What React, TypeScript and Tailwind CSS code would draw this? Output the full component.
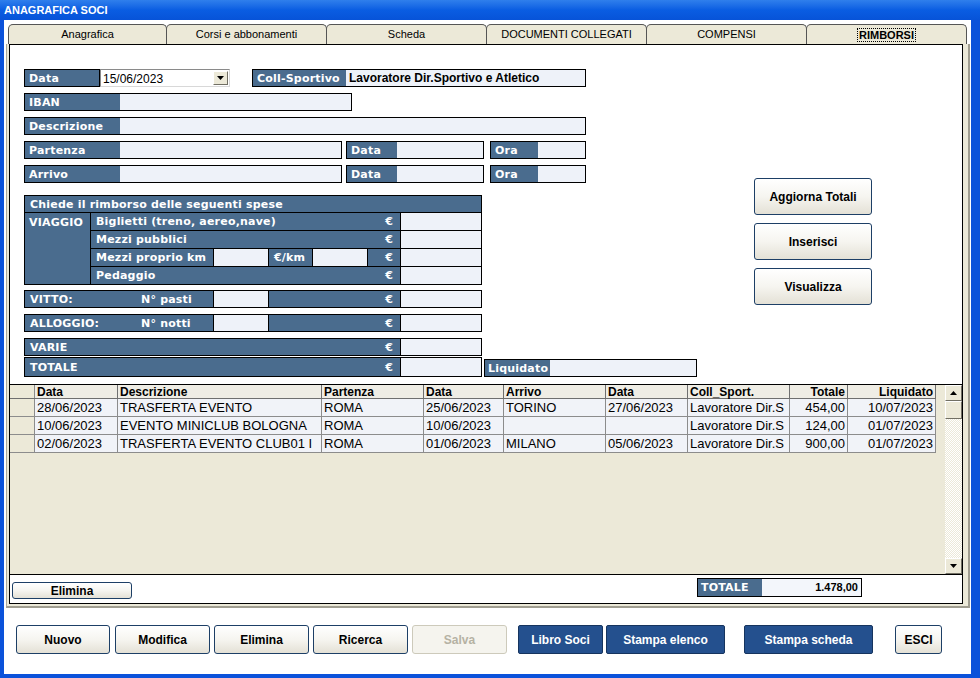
import * as React from 'react';

const LBL =
  "bg-[#4a6c8e] text-white font-['DejaVu_Sans',sans-serif] font-bold text-[11px] tracking-[0.2px] leading-none flex items-center whitespace-nowrap";
const INP = 'bg-[#eef2f9]';
const XPBTN =
  "rounded-[3px] border border-[#1d3f66] bg-linear-to-b from-[#ffffff] via-[#f6f5f0] to-[#e4e1d6] font-['Liberation_Sans',sans-serif] font-bold text-[12px] text-black flex items-center justify-center";
const BLUEBTN =
  "rounded-[2px] border border-[#16345e] bg-[#24508e] font-['Liberation_Sans',sans-serif] font-bold text-[12px] text-white flex items-center justify-center";

const tabs = ['Anagrafica', 'Corsi e abbonamenti', 'Scheda', 'DOCUMENTI COLLEGATI', 'COMPENSI', 'RIMBORSI'];

const rows = [
  ['28/06/2023', 'TRASFERTA EVENTO', 'ROMA', '25/06/2023', 'TORINO', '27/06/2023', 'Lavoratore Dir.S', '454,00', '10/07/2023'],
  ['10/06/2023', 'EVENTO MINICLUB BOLOGNA', 'ROMA', '10/06/2023', '', '', 'Lavoratore Dir.S', '124,00', '01/07/2023'],
  ['02/06/2023', 'TRASFERTA EVENTO CLUB01 I', 'ROMA', '01/06/2023', 'MILANO', '05/06/2023', 'Lavoratore Dir.S', '900,00', '01/07/2023'],
];

const cols = [
  { name: 'Data', w: 'w-[83px]' },
  { name: 'Descrizione', w: 'w-[204px]' },
  { name: 'Partenza', w: 'w-[102px]' },
  { name: 'Data', w: 'w-[80px]' },
  { name: 'Arrivo', w: 'w-[102px]' },
  { name: 'Data', w: 'w-[82px]' },
  { name: 'Coll_Sport.', w: 'w-[102px]' },
  { name: 'Totale', w: 'w-[58px]', right: true },
  { name: 'Liquidato', w: 'w-[88px]', right: true },
];

function Euro({ text, className = '' }: { text?: string; className?: string }) {
  return (
    <div className={`${LBL} ${className} justify-between pl-[5px] pr-[7px]`}>
      <span>{text}</span>
      <span>€</span>
    </div>
  );
}

function ExpRow({ label, last }: { label: string; last?: boolean }) {
  return (
    <div className={`flex ${last ? 'h-[17px]' : 'h-[18px] border-b border-black'}`}>
      <Euro text={label} className="flex-1" />
      <div className={`w-[81px] shrink-0 border-l border-black ${INP}`} />
    </div>
  );
}

function Arrow({ down }: { down?: boolean }) {
  return (
    <svg width="7" height="4" viewBox="0 0 7 4">
      <path d={down ? 'M0 0H7L3.5 4Z' : 'M0 4H7L3.5 0Z'} fill="#000" />
    </svg>
  );
}

export default function App() {
  return (
    <div className="w-[980px] h-[678px] bg-[#0b52da] flex flex-col overflow-hidden">
      {/* Title bar */}
      <div className="h-[20px] shrink-0 bg-linear-to-b from-[#2f7fec] via-[#0a5de2] to-[#0753d8] pl-[4px] flex items-center text-white font-['Liberation_Sans',sans-serif] font-bold text-[11px]">
        ANAGRAFICA SOCI
      </div>

      {/* Window body */}
      <div className="flex-1 ml-[4px] mr-[9px] mb-[4px] bg-white flex flex-col">
        {/* Tabs */}
        <div className="mt-[4px] pl-[4px] flex h-[20px]">
          {tabs.map((t, i) => (
            <div
              key={t}
              className={`${i === 0 ? 'w-[159px]' : 'w-[161px] -ml-px'} h-[20px] rounded-t-[5px] border border-b-0 border-[#555] bg-[#ece9d8] flex items-center justify-center font-['Liberation_Sans',sans-serif] text-[11px] text-black ${i === 5 ? 'font-bold' : ''}`}
            >
              {i === 5 ? (
                <span className="border border-dotted border-black px-[1px] leading-[12px]">{t}</span>
              ) : (
                t
              )}
            </div>
          ))}
        </div>

        {/* Tab panel */}
        <div className="ml-[2px] w-[964px] h-[564px] border-l border-l-[#aca899] border-r-2 border-b-2 border-r-[#a09d90] border-b-[#a09d90] bg-[#ece9d8] pl-[2px] pr-[5px] pb-[2px]">
          <div className="h-full border border-black bg-white flex flex-col">
            {/* Form */}
            <div className="h-[339px] pt-[24px] pl-[14px] flex">
              <div className="w-[562px] shrink-0 flex flex-col">
                {/* Row 1 */}
                <div className="flex h-[18px]">
                  <div className="w-[76px] h-[18px] border border-black flex">
                    <div className={`${LBL} flex-1 pl-[4px]`}>Data</div>
                  </div>
                  <div className="w-[130px] h-[18px] border border-[#8a8a8a] border-r-[#d8d8d8] border-b-[#d8d8d8] bg-white flex items-center">
                    <span className="pl-[2px] pt-[2px] flex-1 font-['Liberation_Sans',sans-serif] text-[12px] text-black leading-none">
                      15/06/2023
                    </span>
                    <div className="w-[15px] h-[14px] mr-px border border-t-white border-l-white border-r-[#716f64] border-b-[#716f64] bg-[#ece9d8] flex items-center justify-center">
                      <Arrow down />
                    </div>
                  </div>
                  <div className="ml-[22px] w-[334px] h-[18px] border border-black flex">
                    <div className={`${LBL} w-[93px] pl-[4px]`}>Coll-Sportivo</div>
                    <div className={`flex-1 ${INP} flex items-center pl-[3px] font-['Liberation_Sans',sans-serif] font-bold text-[12px] text-black whitespace-nowrap`}>
                      Lavoratore Dir.Sportivo e Atletico
                    </div>
                  </div>
                </div>

                {/* IBAN */}
                <div className="mt-[6px] w-[328px] h-[18px] border border-black flex">
                  <div className={`${LBL} w-[95px] pl-[4px]`}>IBAN</div>
                  <div className={`flex-1 ${INP}`} />
                </div>

                {/* Descrizione */}
                <div className="mt-[6px] w-[562px] h-[18px] border border-black flex">
                  <div className={`${LBL} w-[95px] pl-[4px]`}>Descrizione</div>
                  <div className={`flex-1 ${INP}`} />
                </div>

                {['Partenza', 'Arrivo'].map((l) => (
                  <div key={l} className="mt-[6px] flex h-[18px]">
                    <div className="w-[318px] h-[18px] border border-black flex">
                      <div className={`${LBL} w-[95px] pl-[4px]`}>{l}</div>
                      <div className={`flex-1 ${INP}`} />
                    </div>
                    <div className="ml-[4px] w-[138px] h-[18px] border border-black flex">
                      <div className={`${LBL} w-[50px] pl-[4px]`}>Data</div>
                      <div className={`flex-1 ${INP}`} />
                    </div>
                    <div className="ml-[6px] w-[96px] h-[18px] border border-black flex">
                      <div className={`${LBL} w-[47px] pl-[4px]`}>Ora</div>
                      <div className={`flex-1 ${INP}`} />
                    </div>
                  </div>
                ))}

                {/* Spese */}
                <div className="mt-[12px] w-[458px] border border-black">
                  <div className={`${LBL} h-[17px] pl-[5px] border-b border-black`}>
                    Chiede il rimborso delle seguenti spese
                  </div>
                  <div className="flex">
                    <div className={`${LBL} w-[66px] shrink-0 border-r border-black !items-start pt-[4px] pl-[4px]`}>VIAGGIO</div>
                    <div className="flex-1 flex flex-col">
                      <ExpRow label="Biglietti (treno, aereo,nave)" />
                      <ExpRow label="Mezzi pubblici" />
                      <div className="flex h-[18px] border-b border-black">
                        <div className={`${LBL} w-[122px] pl-[5px]`}>Mezzi proprio km</div>
                        <div className={`w-[55px] border-l border-black ${INP}`} />
                        <div className={`${LBL} w-[44px] border-l border-black pl-[5px]`}>€/km</div>
                        <div className={`w-[55px] border-l border-black ${INP}`} />
                        <div className={`${LBL} w-[33px] border-l border-black justify-end pr-[7px]`}>€</div>
                        <div className={`w-[81px] border-l border-black ${INP}`} />
                      </div>
                      <ExpRow label="Pedaggio" last />
                    </div>
                  </div>
                </div>

                {[
                  ['VITTO:', 'N° pasti'],
                  ['ALLOGGIO:', 'N° notti'],
                ].map(([a, b], i) => (
                  <div key={a} className={`${i === 0 ? 'mt-[5px]' : 'mt-[6px]'} w-[458px] h-[18px] border border-black flex`}>
                    <div className={`${LBL} w-[188px] pl-[5px]`}>
                      <span className="w-[111px]">{a}</span>
                      <span>{b}</span>
                    </div>
                    <div className={`w-[55px] border-l border-black ${INP}`} />
                    <Euro className="w-[132px] border-l border-black" />
                    <div className={`w-[81px] border-l border-black ${INP}`} />
                  </div>
                ))}

                <div className="mt-[6px] w-[458px] h-[18px] border border-black flex">
                  <Euro text="VARIE" className="flex-1" />
                  <div className={`w-[81px] shrink-0 border-l border-black ${INP}`} />
                </div>

                <div className="mt-px w-[673px] flex items-end">
                  <div className="w-[458px] shrink-0 h-[20px] border border-black flex">
                    <Euro text="TOTALE" className="flex-1" />
                    <div className={`w-[81px] shrink-0 border-l border-black ${INP}`} />
                  </div>
                  <div className="ml-[2px] w-[213px] shrink-0 h-[18px] border border-black flex">
                    <div className={`${LBL} w-[65px] pl-[3px]`}>Liquidato</div>
                    <div className={`flex-1 ${INP}`} />
                  </div>
                </div>
              </div>

              {/* Right buttons */}
              <div className="ml-[168px] pt-[109px] flex flex-col gap-[8px]">
                <div className={`${XPBTN} w-[118px] h-[37px]`}>Aggiorna Totali</div>
                <div className={`${XPBTN} w-[118px] h-[37px]`}>Inserisci</div>
                <div className={`${XPBTN} w-[118px] h-[37px]`}>Visualizza</div>
              </div>
            </div>

            {/* Grid */}
            <div className="h-[191px] border-t border-b border-black bg-[#ece9d8] flex">
              <div className="w-[926px] flex flex-col">
                <div className="flex h-[14px] border-b border-[#6f6f6f]">
                  <div className="w-[25px] border-r border-[#8c8c8c] bg-[#ece9d8]" />
                  {cols.map((c, i) => (
                    <div
                      key={i}
                      className={`${c.w} border-r border-[#6f6f6f] bg-[#efede5] px-[2px] flex items-center ${c.right ? 'justify-end' : ''} font-['Liberation_Sans',sans-serif] font-bold text-[12px] leading-none text-black`}
                    >
                      {c.name}
                    </div>
                  ))}
                </div>
                {rows.map((r, ri) => (
                  <div key={ri} className="flex h-[18px] border-b border-[#8c8c8c]">
                    <div className="w-[25px] border-r border-[#8c8c8c] bg-[#ece9d8]" />
                    {r.map((v, ci) => (
                      <div
                        key={ci}
                        className={`${cols[ci].w} border-r border-[#8c8c8c] bg-[#f1f3f8] px-[2px] flex items-center overflow-hidden whitespace-nowrap ${cols[ci].right ? 'justify-end' : ''} font-['Liberation_Sans',sans-serif] text-[13px] leading-none text-black`}
                      >
                        {v}
                      </div>
                    ))}
                  </div>
                ))}
              </div>
              {/* Scrollbar */}
              <div className="ml-[9px] w-[17px] flex flex-col">
                <div className="h-[16px] border border-t-white border-l-white border-r-[#716f64] border-b-[#716f64] bg-[#ece9d8] flex items-center justify-center">
                  <Arrow />
                </div>
                <div className="h-[18px] border border-t-white border-l-white border-r-[#716f64] border-b-[#716f64] bg-[#ece9d8]" />
                <div className="flex-1 bg-[repeating-conic-gradient(#ece9d8_0%_25%,#ffffff_0%_50%)] bg-[length:2px_2px]" />
                <div className="h-[16px] border border-t-white border-l-white border-r-[#716f64] border-b-[#716f64] bg-[#ece9d8] flex items-center justify-center">
                  <Arrow down />
                </div>
              </div>
            </div>

            {/* Bottom strip */}
            <div className="flex-1 flex items-start">
              <div className={`${XPBTN} ml-[2px] mt-[7px] w-[120px] h-[17px] leading-none`}>Elimina</div>
              <div className="ml-[565px] mt-[3px] w-[165px] h-[19px] border border-black flex">
                <div className={`${LBL} w-[64px] pl-[3px]`}>TOTALE</div>
                <div className="flex-1 bg-[#f3f6fb] flex items-center justify-end pr-[3px] font-['Liberation_Sans',sans-serif] font-bold text-[11px] text-black">
                  1.478,00
                </div>
              </div>
            </div>
          </div>
        </div>

        {/* Bottom buttons */}
        <div className="mt-[17px] pl-[12px] flex h-[29px]">
          <div className={`${XPBTN} w-[94px]`}>Nuovo</div>
          <div className={`${XPBTN} w-[95px] ml-[5px]`}>Modifica</div>
          <div className={`${XPBTN} w-[95px] ml-[4px]`}>Elimina</div>
          <div className={`${XPBTN} w-[95px] ml-[4px]`}>Ricerca</div>
          <div className="w-[95px] ml-[4px] rounded-[3px] border border-[#cdcabb] bg-[#f5f4ee] font-['Liberation_Sans',sans-serif] font-bold text-[12px] text-[#b5b2a3] flex items-center justify-center">
            Salva
          </div>
          <div className={`${BLUEBTN} w-[85px] ml-[11px]`}>Libro Soci</div>
          <div className={`${BLUEBTN} w-[119px] ml-[3px]`}>Stampa elenco</div>
          <div className={`${BLUEBTN} w-[129px] ml-[19px]`}>Stampa scheda</div>
          <div className={`${XPBTN} w-[47px] ml-[22px]`}>ESCI</div>
        </div>
      </div>
    </div>
  );
}
